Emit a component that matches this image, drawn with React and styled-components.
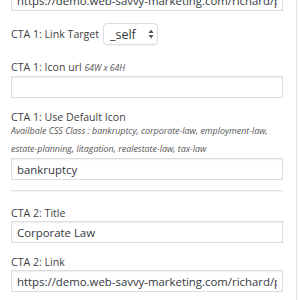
import React from "react";
import styled, { createGlobalStyle } from "styled-components";

const Global = createGlobalStyle`
  html, body { margin: 0; padding: 0; background: #fff; }
  body { font-family: "Open Sans", "Noto Sans", sans-serif; overflow: hidden; }
  * { box-sizing: border-box; }
`;

const Panel = styled.div`
  width: 297px;
  height: 300px;
  border-right: 1px solid #e5e5e5;
  padding: 0 13px 0 11px;
  overflow: hidden;
`;

const Form = styled.div`
  margin-top: -11px;
  display: flex;
  flex-direction: column;
`;

const Field = styled.div`
  display: flex;
  flex-direction: column;
  margin-top: ${(p) => p.$gap ?? 12}px;
`;

const Label = styled.label`
  display: block;
  font-size: 10.6px;
  line-height: 16px;
  color: #3f3f3f;
  white-space: nowrap;
`;

const Small = styled.small`
  font-size: 8.6px;
  font-style: italic;
  color: #555;
`;

const Desc = styled.div`
  font-size: 8.9px;
  font-style: italic;
  line-height: 18px;
  color: #555;
  margin-top: -3px;
`;

const Input = styled.input`
  display: block;
  width: 272px;
  height: 22px;
  margin: 0;
  padding: 0 5px;
  border: 1px solid #ddd;
  border-radius: 0;
  box-shadow: inset 0 1px 2px rgba(0, 0, 0, 0.07);
  background: #fff;
  font-family: "Open Sans", "Noto Sans", sans-serif;
  font-size: 11.4px;
  color: #32373c;
  outline: none;
`;

const Row = styled.div`
  display: flex;
  align-items: center;
  gap: 4px;
  margin-top: 12px;
`;

const SelectWrap = styled.span`
  position: relative;
  display: inline-flex;
`;

const Select = styled.select`
  appearance: none;
  -webkit-appearance: none;
  width: 55px;
  height: 22px;
  margin: 0;
  padding: 0 0 0 6px;
  border: 1px solid #ddd;
  border-radius: 4px;
  background: #fff;
  box-shadow: 0 1px 1px rgba(0, 0, 0, 0.04);
  font-family: "Open Sans", "Noto Sans", sans-serif;
  font-size: 12.4px;
  color: #32373c;
  outline: none;
`;

const Arrows = styled.svg`
  position: absolute;
  right: 4px;
  top: 6px;
  pointer-events: none;
`;

const Rule = styled.hr`
  width: 272px;
  margin: 10px 0 0 0;
  border: 0;
  border-top: 1px solid #e2e2e2;
  border-bottom: 1px solid #f3f3f3;
`;

export default function App() {
  return (
    <>
      <Global />
      <Panel>
        <Form>
          <Input
            readOnly
            defaultValue="https://demo.web-savvy-marketing.com/richard/practice"
          />
          <Row>
            <Label>CTA 1: Link Target</Label>
            <SelectWrap>
              <Select defaultValue="_self">
                <option value="_self">_self</option>
                <option value="_blank">_blank</option>
              </Select>
              <Arrows width="6" height="10" viewBox="0 0 6 10">
                <path d="M3 0.5 L5.5 4 L0.5 4 Z" fill="#555" />
                <path d="M3 9.5 L5.5 6 L0.5 6 Z" fill="#555" />
              </Arrows>
            </SelectWrap>
          </Row>
          <Field $gap={14}>
            <Label>
              CTA 1: Icon url <Small>64W x 64H</Small>
            </Label>
            <Input readOnly defaultValue="" />
          </Field>
          <Field $gap={11}>
            <Label>CTA 1: Use Default Icon</Label>
            <Desc>
              Availbale CSS Class : bankruptcy, corporate-law, employment-law,
              <br />
              estate-planning, litagation, realestate-law, tax-law
            </Desc>
            <Input readOnly defaultValue="bankruptcy" />
          </Field>
          <Rule />
          <Field $gap={13}>
            <Label>CTA 2: Title</Label>
            <Input readOnly defaultValue="Corporate Law" />
          </Field>
          <Field $gap={11}>
            <Label>CTA 2: Link</Label>
            <Input
              readOnly
              defaultValue="https://demo.web-savvy-marketing.com/richard/practice"
            />
          </Field>
        </Form>
      </Panel>
    </>
  );
}
